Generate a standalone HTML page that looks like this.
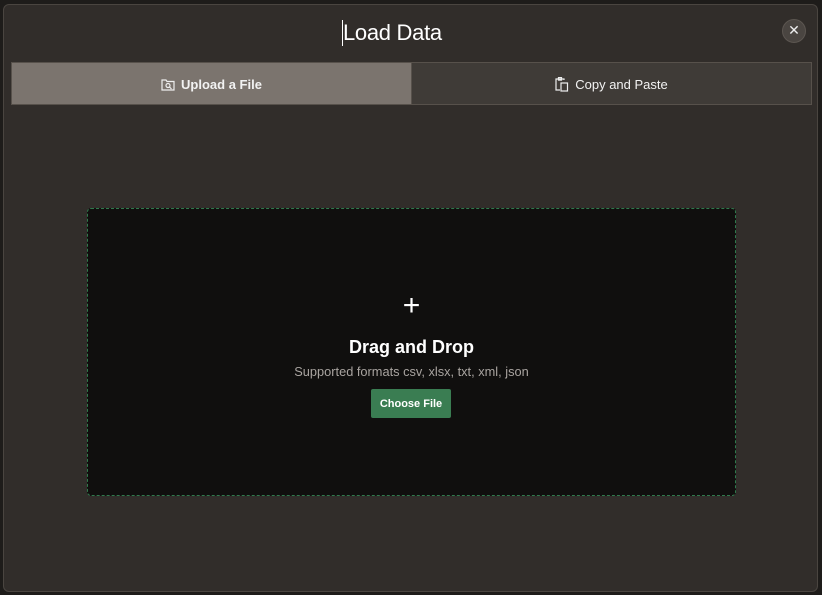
<!DOCTYPE html>
<html><head><style>
body{margin:0;width:822px;height:595px;background:#1e1c1a;overflow:hidden;position:relative;font-family:"Liberation Sans",sans-serif}
.dlg{position:absolute;left:3px;top:4px;width:815px;height:588px;background:#312d2a;border:1px solid #4a4540;border-radius:6px;box-sizing:border-box}
.title{position:absolute;left:339px;top:15px;color:#fff;font-size:22px;letter-spacing:-0.3px}
.cur{position:absolute;left:338px;top:15px;width:1px;height:26px;background:#fff}
.close{position:absolute;left:778px;top:14px;width:22px;height:22px;border-radius:50%;background:#4a4541;border:1px solid #5c5651;color:#eee;font-size:14px;text-align:center;line-height:21px}
.tabs{position:absolute;left:7px;top:57px;width:801px;height:43px;display:flex;border:1px solid #57514b;box-sizing:border-box}
.tab{flex:1;display:flex;align-items:center;justify-content:center;color:#f2f2f2;font-size:13px;gap:6px;padding-top:1px}
.t1{background:#7b746e;font-weight:bold}
.t2{background:#3f3b37;border-left:1px solid #57514b}
.drop{position:absolute;left:83px;top:203px;width:649px;height:288px;background:#100f0e;border:1px dashed #2f7a4c;border-radius:4px;box-sizing:border-box;text-align:center;color:#fff}
.plus{position:absolute;left:0;right:0;top:82px;font-size:30px;font-weight:300;line-height:30px}
.h{position:absolute;left:0;right:0;top:128px;font-size:18px;font-weight:bold}
.s{position:absolute;left:0;right:0;top:155px;font-size:12.8px;color:#a9a4a0}
.btn{position:absolute;left:283px;top:180px;width:80px;height:29px;background:#3a7d52;border-radius:2px;font-size:11px;font-weight:bold;line-height:30px}
</style></head><body>
<div class="dlg">
<div class="title">Load Data</div>
<div class="cur"></div>
<div class="close">✕</div>
<div class="tabs">
<div class="tab t1"><svg width="14" height="13" viewBox="0 0 14 13" fill="none" stroke="#eee" stroke-width="1.2"><path d="M1 2h4l1 1.5h7v8.5H1z"/><circle cx="7" cy="7.5" r="2"/><path d="M8.5 9l2 2"/></svg>Upload a File</div>
<div class="tab t2"><svg width="14" height="15" viewBox="0 0 14 15" fill="none" stroke="#eee" stroke-width="1.2"><path d="M9 3V2H1v11h4"/><rect x="3.5" y="0.6" width="3" height="2.5"/><rect x="6" y="6" width="6.5" height="8"/></svg>Copy and Paste</div>
</div>
<div class="drop">
<div class="plus">+</div>
<div class="h">Drag and Drop</div>
<div class="s">Supported formats csv, xlsx, txt, xml, json</div>
<div class="btn">Choose File</div>
</div>
</div>
</body></html>
